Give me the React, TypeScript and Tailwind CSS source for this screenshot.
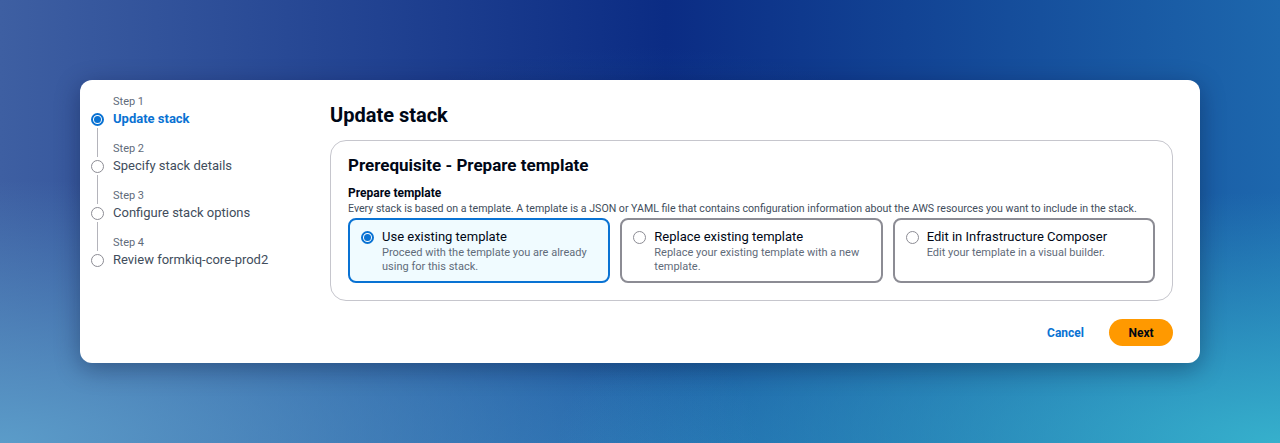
import React from 'react';

const steps = [
  { label: 'Step 1', title: 'Update stack' },
  { label: 'Step 2', title: 'Specify stack details' },
  { label: 'Step 3', title: 'Configure stack options' },
  { label: 'Step 4', title: 'Review formkiq-core-prod2' },
];

const tiles = [
  { title: 'Use existing template', desc: 'Proceed with the template you are already using for this stack.', selected: true },
  { title: 'Replace existing template', desc: 'Replace your existing template with a new template.', selected: false },
  { title: 'Edit in Infrastructure Composer', desc: 'Edit your template in a visual builder.', selected: false },
];

const Radio: React.FC<{ on: boolean }> = ({ on }) =>
  on ? (
    <span className="flex h-[13px] w-[13px] shrink-0 items-center justify-center rounded-full border-[2px] border-[#0972d3] bg-white">
      <span className="h-[7px] w-[7px] rounded-full bg-[#0972d3]" />
    </span>
  ) : (
    <span className="h-[13px] w-[13px] shrink-0 rounded-full border-[1.5px] border-[#8c8c94] bg-white" />
  );

const Steps: React.FC = () => (
  <nav className="w-[239px] shrink-0 pt-[14px]">
    {steps.map((s, i) => {
      const active = i === 0;
      const last = i === steps.length - 1;
      return (
        <div key={s.label} className="flex">
          <div className="flex w-[13px] flex-col items-center">
            <div className={`h-[16px] w-px ${i > 0 ? 'bg-[#b4b4bb]' : ''}`} />
            <div className="flex h-[18px] items-center">
              <Radio on={active} />
            </div>
            {!last && <div className="w-px flex-1 bg-[#b4b4bb]" />}
          </div>
          <div className={`pl-[9px] ${last ? '' : 'pb-[13px]'}`}>
            <div className="text-[11px] leading-[16px] text-[#5f6b7a]">{s.label}</div>
            <div
              className={`text-[13px] leading-[18px] ${
                active ? 'font-bold text-[#0972d3]' : 'text-[#414d5c]'
              }`}
            >
              {s.title}
            </div>
          </div>
        </div>
      );
    })}
  </nav>
);

export default function App() {
  return (
    <div
      className="h-[443px] w-full overflow-hidden px-[80px] pt-[80px] bg-[radial-gradient(ellipse_at_100%_100%,#36b0cc_0%,transparent_40%),radial-gradient(ellipse_at_0%_100%,#5b9cc9_0%,transparent_42%),radial-gradient(ellipse_at_50%_130%,#2678b8_0%,transparent_65%),linear-gradient(90deg,#3e5fa2_0%,#0b2c84_52%,#1d67ad_100%)]"
      style={{ fontFamily: 'Roboto, "Liberation Sans", Arial, sans-serif' }}
    >
      <div className="flex h-[283px] rounded-[12px] bg-white pl-[11px] pr-[27px] shadow-[0_6px_24px_rgba(0,10,40,0.35)]">
        <Steps />
        <main className="flex min-w-0 flex-1 flex-col pt-[23px]">
          <h1 className="mb-[13px] text-[20px] font-bold leading-[24px] text-[#000716]">Update stack</h1>
          <section className="rounded-[16px] border border-[#c6c6cd] px-[17px] pb-[17px] pt-[13px]">
            <h2 className="text-[17px] font-bold leading-[22px] text-[#000716]">Prerequisite - Prepare template</h2>
            <div className="mt-[9px] text-[12px] font-bold leading-[16px] text-[#000716]">Prepare template</div>
            <p className="text-[10.6px] leading-[15px] text-[#414d5c]">
              Every stack is based on a template. A template is a JSON or YAML file that contains configuration
              information about the AWS resources you want to include in the stack.
            </p>
            <div className="mt-[2px] grid grid-cols-3 gap-[10px]">
              {tiles.map((t) => (
                <div
                  key={t.title}
                  className={`flex h-[65px] gap-[8px] rounded-[8px] border-[2px] px-[11px] pt-[9px] ${
                    t.selected ? 'border-[#0972d3] bg-[#f0fbff]' : 'border-[#8c8c94] bg-white'
                  }`}
                >
                  <div className="flex h-[16px] items-center">
                    <Radio on={t.selected} />
                  </div>
                  <div>
                    <div className="text-[13px] leading-[16px] text-[#000716]">{t.title}</div>
                    <div className="mt-[1px] text-[11px] leading-[14px] text-[#5f6b7a]">{t.desc}</div>
                  </div>
                </div>
              ))}
            </div>
          </section>
          <div className="mt-[18px] flex items-center justify-end gap-[25px]">
            <button className="text-[12px] font-bold text-[#0972d3]">Cancel</button>
            <button className="h-[27px] w-[64px] rounded-full bg-[#ff9900] text-[12px] font-bold text-[#000716]">
              Next
            </button>
          </div>
        </main>
      </div>
    </div>
  );
}
